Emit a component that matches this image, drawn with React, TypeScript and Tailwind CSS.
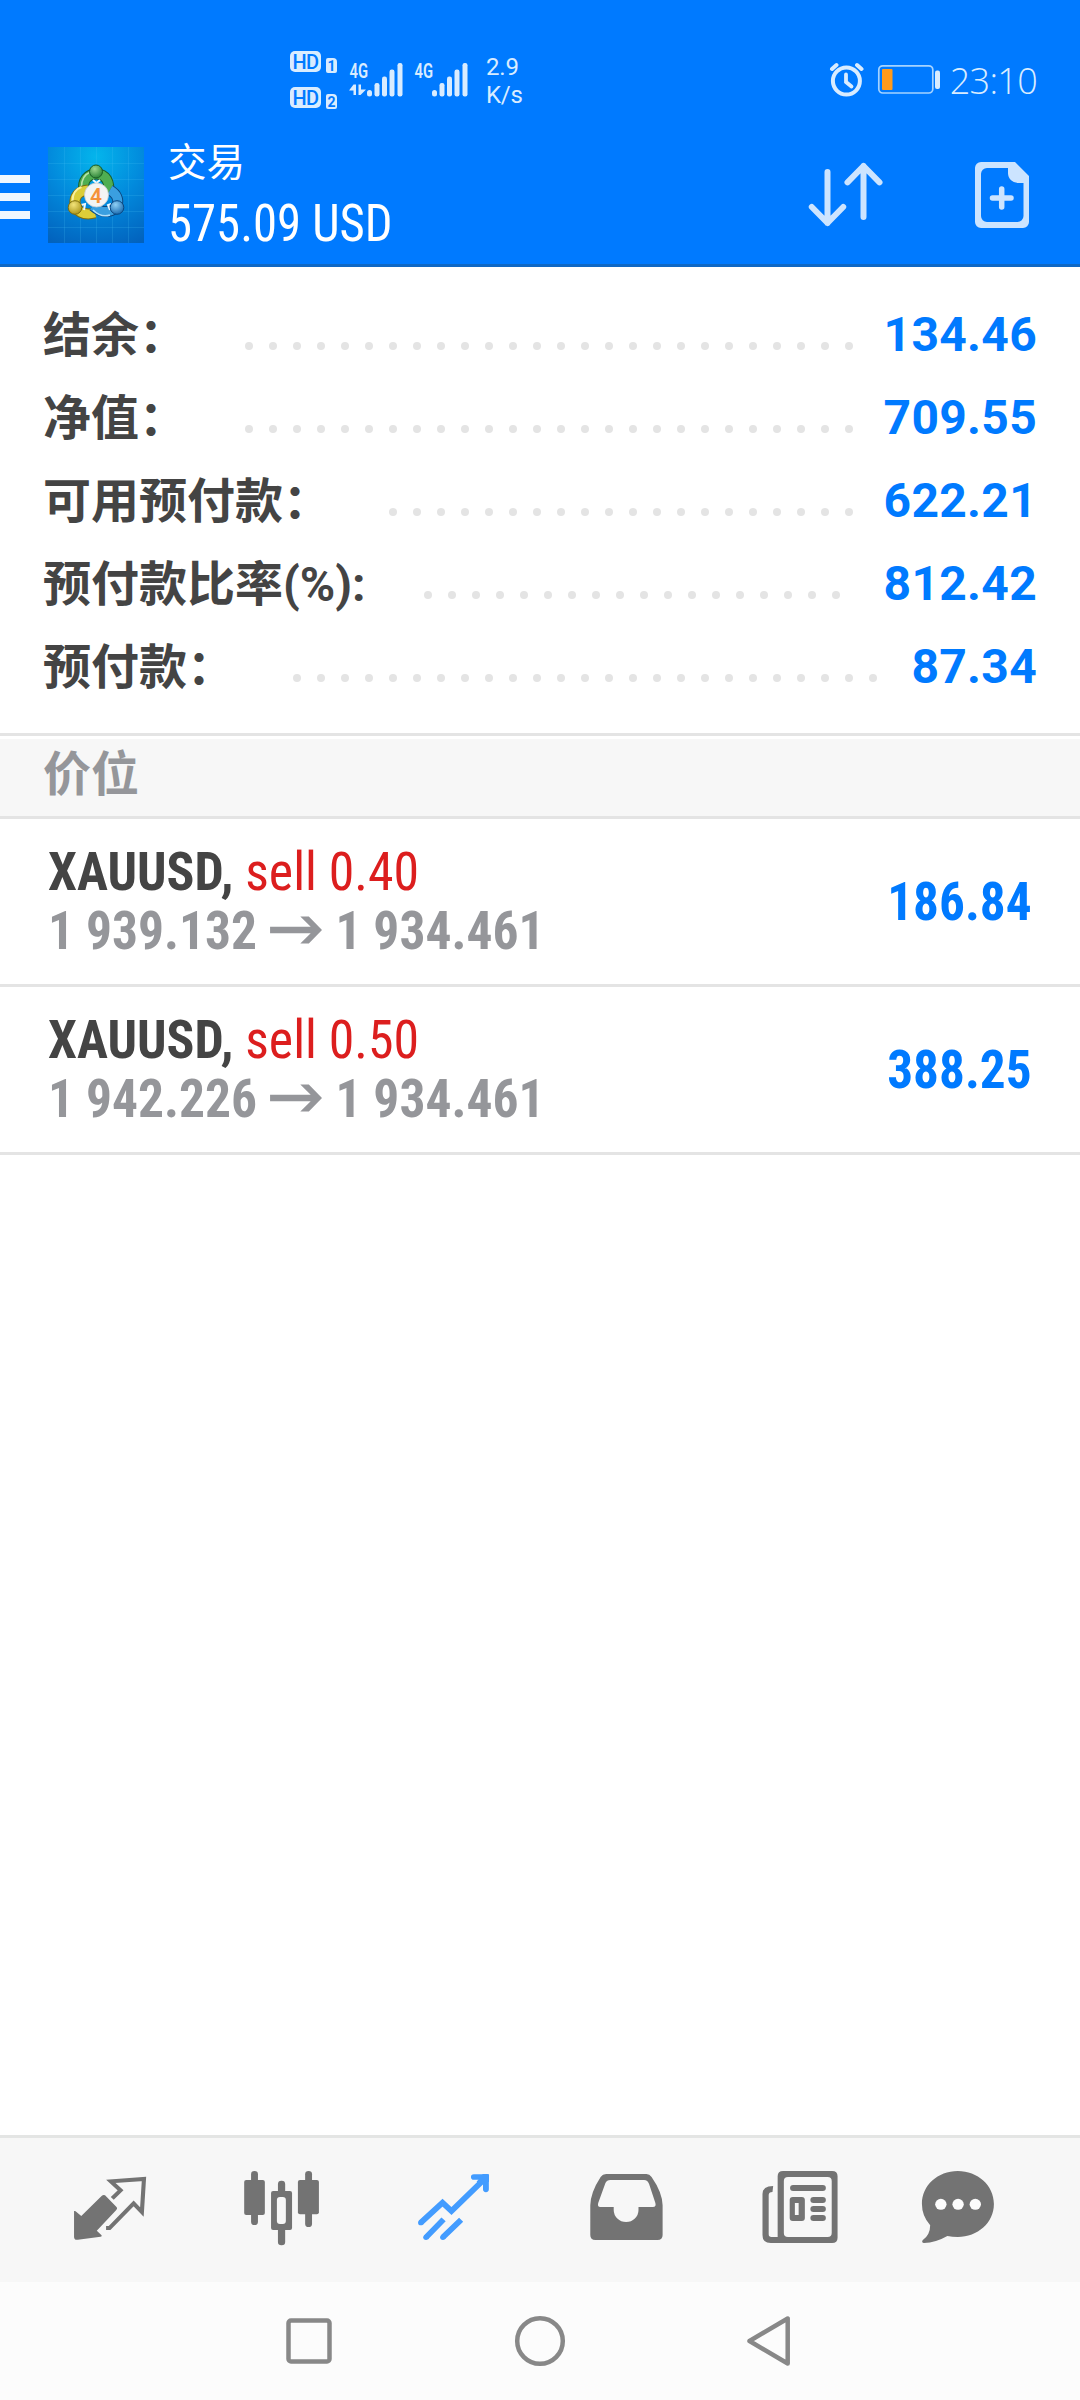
import React from "react";

const balance = [
  { label: "结余：", value: "134.46", width: "w-[202px]", dots: 26 },
  { label: "净值：", value: "709.55", width: "w-[202px]", dots: 26 },
  { label: "可用预付款：", value: "622.21", width: "w-[346px]", dots: 20 },
  { label: "预付款比率(%):", value: "812.42", width: "w-[381px]", dots: 18 },
  { label: "预付款：", value: "87.34", width: "w-[250px]", dots: 25 },
];

const positions = [
  {
    id: 1,
    symbol: "XAUUSD,",
    side: "sell 0.40",
    open: "1 939.132",
    current: "1 934.461",
    profit: "186.84",
  },
  {
    id: 2,
    symbol: "XAUUSD,",
    side: "sell 0.50",
    open: "1 942.226",
    current: "1 934.461",
    profit: "388.25",
  },
];

const HdBadge = ({ sim }: { sim: string }) => (
  <div className="flex items-end gap-[5px] h-[22px]">
    <span className="w-[31px] h-[21px] mb-px rounded-[5px] bg-[#d9ecff] text-[#007aff] text-[20px] leading-[22px] font-medium text-center tracking-[-0.5px]">
      HD
    </span>
    <span className="w-[11px] h-[15px] rounded-[2px] rounded-tr-[4px] bg-[#d9ecff] text-[#007aff] text-[14px] leading-[16px] font-bold text-center">
      {sim}
    </span>
  </div>
);

const Signal = ({ data }: { data?: boolean }) => (
  <svg className="w-[54px] h-[44px]" viewBox="0 -10 54 44" fill="#d9ecff">
    <text
      x="0.5"
      y="14.5"
      fontSize="20"
      fontWeight="600"
      textLength="18.5"
      lengthAdjust="spacingAndGlyphs"
    >
      4G
    </text>
    {data && (
      <path d="M4.500 21.500H7V32H4.500V27.500H0zM9.500 21.500H12V26.500h5L11.500 32H9.500z" />
    )}
    <rect x="18" y="27" width="5" height="6.500" rx="2.500" />
    <rect x="25.500" y="20" width="5" height="13.500" rx="2.200" />
    <rect x="33" y="13.500" width="5" height="20" rx="2.200" />
    <rect x="40.500" y="6.500" width="5" height="27" rx="2.200" />
    <rect x="48.500" y="0" width="5" height="33.500" rx="2.200" />
  </svg>
);

const StatusBar = () => (
  <div className="flex h-[120px] pl-[290px] text-[#d9ecff]">
    <div className="flex flex-col gap-[14px] pt-[51px] w-[59px]">
      <HdBadge sim="1" />
      <HdBadge sim="2" />
    </div>
    <div className="flex gap-[11px] pt-[53px] w-[137px]">
      <Signal data />
      <Signal />
    </div>
    <div className="pt-[53px] text-[24px] leading-[28px] tracking-[-0.2px]">
      <p>2.9</p>
      <p>K/s</p>
    </div>
    <div className="flex ml-auto pt-[60px] pr-[43px]">
      <svg className="w-[36px] h-[40px]" viewBox="828 60 36 40" fill="none" stroke="#d9ecff" strokeWidth="4" strokeLinecap="round">
        <circle cx="846.400" cy="81" r="13.500" />
        <path d="M846 74.500v7.500l5.500 4.500" strokeWidth="3.800" />
        <path d="M832 69l4.500-4M857 65l4.500 4" />
      </svg>
      <svg className="w-[80px] h-[40px] ml-[4px]" viewBox="868 60 80 40">
        <rect x="878.800" y="65.800" width="54" height="27.200" rx="4" fill="none" stroke="#a5d3ff" strokeWidth="1.700" />
        <rect x="882" y="69" width="10.500" height="21" rx="1" fill="#ff9a1c" />
        <rect x="935" y="70.500" width="5" height="18.500" rx="2" fill="#d9ecff" />
      </svg>
      <span className="ml-[2px] font-['Open_Sans'] font-light text-[36px] leading-[42px] tracking-[-0.7px]">
        23:10
      </span>
    </div>
  </div>
);

const Logo = () => (
  <svg className="w-[96px] h-[96px]" viewBox="0 0 96 96">
    <defs>
      <radialGradient id="bg" cx="0.5" cy="0.1" r="1">
        <stop offset="0" stopColor="#04b5ec" />
        <stop offset="0.5" stopColor="#0289dc" />
        <stop offset="1" stopColor="#0262bd" />
      </radialGradient>
      <radialGradient id="green" cx="0.4" cy="0.3" r="0.8">
        <stop offset="0" stopColor="#9fd890" />
        <stop offset="1" stopColor="#1c7a2c" />
      </radialGradient>
      <radialGradient id="yellow" cx="0.4" cy="0.3" r="0.8">
        <stop offset="0" stopColor="#f2e37a" />
        <stop offset="1" stopColor="#a38d10" />
      </radialGradient>
      <radialGradient id="blue" cx="0.4" cy="0.3" r="0.8">
        <stop offset="0" stopColor="#8fd0f5" />
        <stop offset="1" stopColor="#0c5fa8" />
      </radialGradient>
    </defs>
    <rect width="96" height="96" fill="url(#bg)" />
    <path
      d="M0 16.500h96M0 32.500h96M0 48.500h96M0 64.500h96M0 80.500h96M16.500 0v96M32.500 0v96M48.500 0v96M64.500 0v96M80.500 0v96"
      stroke="#4cc3f5"
      strokeOpacity="0.2"
      strokeWidth="1"
    />
    <g fill="none">
      <path d="M36 44c-2-11 4-17 12.500-17S63 34 60 48" stroke="#1a5c25" strokeWidth="11" />
      <path d="M36 44c-2-11 4-17 12.500-17S63 34 60 48" stroke="#4fae52" strokeWidth="9" />
      <path d="M33.500 40c0-8 4-13 9-15" stroke="#b9e3a8" strokeWidth="1.500" />
      <path d="M40 43c-10 1-14 7-13 14s8 12 20 9" stroke="#7c6c10" strokeWidth="11" />
      <path d="M40 43c-10 1-14 7-13 14s8 12 20 9" stroke="#dccd38" strokeWidth="9" />
      <path d="M24.500 54c0-7 3-12 9-14" stroke="#f8f0a0" strokeWidth="2" />
      <path d="M62 43c7 4 9 10 7 15-3 7-14 10-24 1" stroke="#0b4780" strokeWidth="11" />
      <path d="M62 43c7 4 9 10 7 15-3 7-14 10-24 1" stroke="#3a9fe0" strokeWidth="9" />
      <path d="M45 63c5 5 11 7 17 5" stroke="#b0e0fa" strokeWidth="1.500" />
      <path d="M45 33l3.500 3 3.500-3M33 58l4-1-1 6M63 57l-3 1 2 5" stroke="#eef8ff" strokeWidth="2" />
    </g>
    <circle cx="48" cy="24.500" r="6.500" fill="url(#green)" stroke="#1a5c25" />
    <circle cx="27" cy="60.500" r="6.800" fill="url(#yellow)" stroke="#7c6c10" />
    <circle cx="69" cy="60.500" r="6.800" fill="url(#blue)" stroke="#0b4780" />
    <circle cx="48.500" cy="48" r="12" fill="#f4f4f4" stroke="#c8ccd0" strokeWidth="0.800" />
    <text x="48" y="55.500" fontSize="21" fontWeight="600" fill="#f5923a" textAnchor="middle">
      4
    </text>
  </svg>
);

const AppBar = () => (
  <div className="flex h-[144px]">
    <div className="flex flex-col gap-[10px] pt-[55px] w-[48px]">
      <span className="w-[30px] h-[8px] bg-[#f0f7ff]"></span>
      <span className="w-[30px] h-[8px] bg-[#f0f7ff]"></span>
      <span className="w-[30px] h-[8px] bg-[#f0f7ff]"></span>
    </div>
    <div className="pt-[27px]">
      <Logo />
    </div>
    <div className="pl-[24px] pt-[19px] text-white">
      <p className="text-[38.500px] leading-[48px]">交易</p>
      <p className="text-[51px] leading-[60px] pt-[7px] origin-left scale-x-[0.955] [font-stretch:75%] [font-weight:440]">
        575.09 USD
      </p>
    </div>
    <div className="flex ml-auto pt-[35px]">
      <svg className="w-[100px] h-[80px]" viewBox="800.500 155 100 80" fill="none" stroke="#cce4ff" strokeWidth="6" strokeLinecap="round" strokeLinejoin="round">
        <path d="M828 172v51M812.300 207l15.700 16 15.700-16" />
        <path d="M864 217v-51M848 182.300l16-16.300 16 16.300" />
      </svg>
      <svg className="w-[110px] h-[80px] ml-[70px]" viewBox="970 155 110 80" fill="#cce4ff">
        <path
          fillRule="evenodd"
          d="M981 162h34l14 14v46a6 6 0 0 1-6 6h-42a6 6 0 0 1-6-6v-54a6 6 0 0 1 6-6zM1008 168h-21a6 6 0 0 0-6 6v42a6 6 0 0 0 6 6h30.500a6 6 0 0 0 6-6v-33h-5a10 10 0 0 1-10.500-10z"
        />
        <path d="M1001.700 189v18M992.500 198h18.500" stroke="#cce4ff" strokeWidth="5.500" strokeLinecap="round" />
      </svg>
    </div>
  </div>
);

const TabBar = () => (
  <div className="flex items-center h-[147px] pl-[24px] bg-[#f7f7f7] border-t-3 border-[#e4e5e4]">
    {/* quotes */}
    <div className="flex justify-center w-[172px]">
      <svg className="w-[112px] h-[96px]" viewBox="156.800 126 325.200 288" preserveAspectRatio="none">
        <path
          d="M215 273q4-1 7 3l14 12 59-60q5-5 10-2l34 36q3 4-2 9l-56 61 14 14q2 4-3 4l-66 9q-11 2-11-9z"
          fill="#737373"
        />
        <path d="M326 235l24-24-28-27 96-7-6 99-24-26-70 74h-10" fill="none" stroke="#737373" strokeWidth="12" />
      </svg>
    </div>
    {/* charts */}
    <div className="flex justify-center w-[172px]">
      <svg className="w-[112px] h-[96px]" viewBox="656.200 126 325.200 288" preserveAspectRatio="none" fill="#737373">
        <rect x="729" y="153" width="20" height="162" rx="10" />
        <rect x="709" y="180" width="60" height="105" rx="6" />
        <rect x="886" y="153" width="20" height="168" rx="10" />
        <rect x="865" y="180" width="61" height="103" rx="6" />
        <rect x="807" y="182" width="21" height="194" rx="10" />
        <rect x="787" y="213" width="61" height="117" rx="6" />
        <rect x="804" y="231" width="26" height="81" rx="9" fill="#f7f7f7" />
      </svg>
    </div>
    {/* trade */}
    <div className="flex justify-center w-[172px]">
      <svg className="w-[112px] h-[96px]" viewBox="1155.700 126 325.200 288" preserveAspectRatio="none" fill="none" stroke="#439cff" strokeWidth="17">
        <path d="M1222 308l63-60 26 25 98-98" />
        <circle cx="1222" cy="308" r="8" fill="#439cff" stroke="none" />
        <path d="M1376 171h35v37" strokeLinecap="round" />
        <path d="M1402 162h13q5 0 5 5v18l-28 8-8-8z" fill="#439cff" stroke="none" />
        <path d="M1237 352l51-54M1286 352l53-53" />
        <circle cx="1237" cy="352" r="8" fill="#439cff" stroke="none" />
        <circle cx="1286" cy="352" r="8" fill="#439cff" stroke="none" />
      </svg>
    </div>
    {/* history */}
    <div className="flex justify-center w-[172px]">
      <svg className="w-[112px] h-[96px]" viewBox="87.100 126 325.200 288" preserveAspectRatio="none" fill="#737373">
        <path
          fillRule="evenodd"
          d="M192 162h117q9 0 15 9 31 46 32 85v89q0 15-15 15H161q-15 0-15-15v-89q1-39 30-85 6-9 16-9zM204 180q-10 0-14 9l-21 60q-3 12 6 12h39v9a36 36 0 0 0 72 0v-9h42q10 0 7-12l-18-56q-4-13-15-13z"
        />
      </svg>
    </div>
    {/* news */}
    <div className="flex justify-center w-[172px]">
      <svg className="w-[112px] h-[96px]" viewBox="586.500 126 325.200 288" preserveAspectRatio="none" fill="#737373">
        <path
          fillRule="evenodd"
          d="M706 153h142q16 0 16 16v184q0 16-16 16H670q-24 0-24-24V222q0-24 31-24l-2 18q-11 0-11 9v118q0 8 8 8h18V169q0-16 16-16zM720 171q-12 0-12 12v156q0 12 12 12h115q12 0 12-12V183q0-12-12-12z"
        />
        <rect x="726" y="195" width="104" height="18" rx="9" />
        <path fillRule="evenodd" d="M734 231h26q9 0 9 9v54q0 9-9 9h-26q-9 0-9-9v-54q0-9 9-9zM740 249v36h11v-36z" />
        <rect x="785" y="231" width="45" height="18" rx="9" />
        <rect x="785" y="258" width="45" height="18" rx="9" />
        <rect x="785" y="285" width="45" height="18" rx="9" />
      </svg>
    </div>
    {/* messages */}
    <div className="flex justify-center w-[172px]">
      <svg className="w-[112px] h-[96px]" viewBox="1086 126 325.200 288" preserveAspectRatio="none" fill="#737373">
        <path d="M1213 153c58 0 105 43 105 99s-47 99-105 99q-16 0-30-3-34 20-68 21-8-1-4-8 22-16 22-45-24-28-24-64c0-56 46-99 104-99z" />
        <circle cx="1164" cy="253" r="16.500" fill="#fcfcfc" />
        <circle cx="1214" cy="253" r="16.500" fill="#fcfcfc" />
        <circle cx="1264" cy="253" r="16.500" fill="#fcfcfc" />
      </svg>
    </div>
  </div>
);

const SystemNav = () => (
  <div className="flex items-center justify-center gap-[171px] h-[118px] bg-[#fcfcfc]">
    <svg className="w-[60px] h-[60px]" viewBox="0 0 60 60" fill="none" stroke="#888888" strokeWidth="4.500">
      <rect x="9.500" y="9.500" width="41" height="41" rx="2.500" />
    </svg>
    <svg className="w-[60px] h-[60px]" viewBox="0 0 60 60" fill="none" stroke="#888888" strokeWidth="4.500">
      <circle cx="30" cy="30" r="22.800" />
    </svg>
    <svg className="w-[60px] h-[60px]" viewBox="0 0 60 60" fill="none" stroke="#888888" strokeWidth="4.500" strokeLinejoin="round">
      <path d="M46.700 7.500v45L8.500 30z" />
    </svg>
  </div>
);

const App: React.FC = () => {
  return (
    <div className="flex flex-col w-[1080px] h-[2400px] bg-white font-[Roboto,'Noto_Sans_CJK_SC',sans-serif] overflow-hidden">
      <header className="h-[267px] bg-[#007aff] border-b-3 border-[#0f68c4]">
        <StatusBar />
        <AppBar />
      </header>

      <section className="h-[469px] pt-[26px] px-[43px] border-b-3 border-[#e4e4e4]">
        {balance.map((row) => (
          <div key={row.label} className="flex items-center h-[83px] font-bold text-[48px] leading-[83px]">
            <span className={`${row.width} shrink-0 whitespace-nowrap pt-[2px] text-[#444444]`}>
              {row.label}
            </span>
            <div className="flex gap-[16px] pt-[23px]">
              {Array.from({ length: row.dots }).map((_, i) => (
                <span key={i} className="w-[8px] h-[8px] rounded-full bg-[#e4e4e4]"></span>
              ))}
            </div>
            <span className="ml-auto tracking-[0.3px] text-[#007aff]">{row.value}</span>
          </div>
        ))}
      </section>

      <div className="h-[80px] mt-[3px] pl-[43px] bg-[#f7f7f7] border-b-3 border-[#e4e4e4] text-[#95969a] text-[48px] leading-[71px] font-bold">
        价位
      </div>

      {positions.map((item) => (
        <div
          key={item.id}
          className="flex items-center justify-between h-[168px] px-[48px] border-b-3 border-[#e4e4e4] text-[54.500px] [font-stretch:75%]"
        >
          <div className="pb-[2px]">
            <p className="leading-[59px] origin-left scale-x-[0.95]">
              <span className="font-bold text-[#444444]">{item.symbol}</span>{" "}
              <span className="[font-weight:440] text-[#dc1e1e]">{item.side}</span>
            </p>
            <p className="flex items-center leading-[59px] font-bold text-[#95969a] origin-left scale-x-[0.945]">
              <span>{item.open}</span>
              <svg className="w-[55px] h-[30px] mx-[14px]" viewBox="0 0 55 30" fill="#95969a">
                <path d="M0 11.800h43L32 1.500h9L55 15 41 28.500h-9l11-10.300H0z" />
              </svg>
              <span>{item.current}</span>
            </p>
          </div>
          <span className="font-bold text-[#007aff] origin-right scale-x-[0.94]">{item.profit}</span>
        </div>
      ))}

      <div className="grow"></div>
      <TabBar />
      <SystemNav />
    </div>
  );
};

export default App;
